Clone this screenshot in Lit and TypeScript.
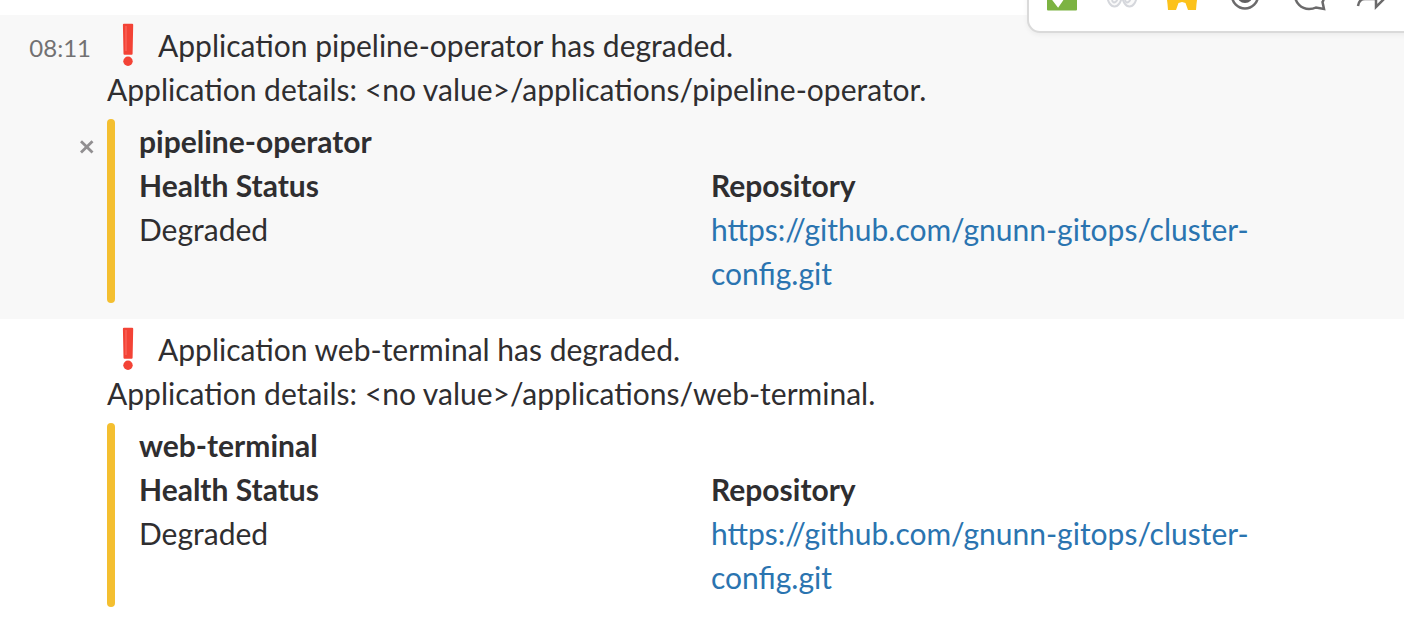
import { LitElement, html, css, svg } from "lit";
import { customElement, property } from "lit/decorators.js";

@customElement("alert-message")
class AlertMessage extends LitElement {
  @property() name = "";
  @property() time = "";
  @property({ type: Boolean, reflect: true }) active = false;

  static styles = css`
    :host { display: grid; grid-template-columns: 107px 1fr; height: 304px; box-sizing: border-box; padding-top: 8px; line-height: 44px; }
    :host([active]) { background: #f8f8f8; }
    .gutter { position: relative; }
    .time { display: block; padding: 3px 16px 0 0; text-align: right; font-size: 24px; line-height: 44px; color: #727172; }
    .close { position: absolute; left: 79px; top: 116px; display: block; }
    .row { height: 44px; white-space: pre; display: flex; }
    .mark { flex: none; width: 51px; }
    .mark svg { display: block; }
    .attachment { margin-top: 8px; height: 184px; display: grid; grid-template-columns: 8px 1fr; column-gap: 24px; }
    .bar { background: #f4bf30; border-radius: 4px; height: 184px; }
    .title, .label { font-weight: 700; }
    .fields { display: grid; grid-template-columns: 572px 560px; }
    a { color: #2a74b0; text-decoration: none; }
  `;

  render() {
    return html`
      <div class="gutter">
        ${this.time ? html`<span class="time">${this.time}</span>
        <svg class="close" width="16" height="16" viewBox="0 0 16 16"><path d="M2 2.2 13.5 13.5M13.5 2.2 2 13.5" stroke="#918f91" stroke-width="2.8" fill="none"/></svg>` : ""}
      </div>
      <div class="content">
        <div class="row">
          <span class="mark"><svg width="44" height="44" viewBox="107 23 44 44" overflow="visible"><path d="M123.900 23.700h8.300q1 0 1 1l-.6 29q0 1-1 1h-7.100q-1 0-1-1l-.6-29q0-1 1-1z" fill="#f34336"/><path d="M126 26v25" stroke="#f8594e" stroke-width="2"/><circle cx="128" cy="61.300" r="4.700" fill="#f34336"/></svg></span>
          <span>Application ${this.name} has degraded.</span>
        </div>
        <div class="row"><span>Application details: &lt;no value&gt;/applications/${this.name}.</span></div>
        <div class="attachment">
          <div class="bar"></div>
          <div class="body">
            <div class="title">${this.name}</div>
            <div class="fields">
              <div><div class="label">Health Status</div><div>Degraded</div></div>
              <div><div class="label">Repository</div><a>https://github.com/gnunn-gitops/cluster-<br>config.git</a></div>
            </div>
          </div>
        </div>
      </div>`;
  }
}

@customElement("app-root")
class AppRoot extends LitElement {
  static styles = css`
    :host { display: block; position: relative; width: 1404px; height: 622px; overflow: hidden; background: #fff; padding-top: 15px; box-sizing: border-box; font: 30px/44px Lato, sans-serif; color: #2f2e30; }
    .toolbar { position: absolute; left: 1027px; top: -44px; width: 420px; height: 77px; box-sizing: border-box; border: 2px solid #dadada; border-radius: 13px; background: #fff; box-shadow: 0 2px 5px rgba(0,0,0,.05); }
    .icons { position: absolute; left: 1028px; top: 0; display: block; }
  `;
  render() {
    return html`
      <alert-message active time="08:11" name="pipeline-operator"></alert-message>
      <alert-message name="web-terminal"></alert-message>
      <div class="toolbar"></div>
      <svg class="icons" width="376" height="30" viewBox="1028 0 376 30" fill="none">
        ${svg`
        <rect x="1047" y="-20" width="30" height="30.500" rx="1" fill="#7cb342"/>
        <path d="M1053 -3l5 6.500L1070 -14" stroke="#fff" stroke-width="5"/>
        <g stroke="#d5d7dc" stroke-width="2" fill="#fafafa"><ellipse cx="1114.500" cy="-4" rx="7" ry="10.500"/><ellipse cx="1129.500" cy="-4" rx="7" ry="10.500"/><path d="M1112 0q1 4 4 1.500 2-2 1.500-5M1125 0q1 4 4 1.500 2-2 1.500-5"/></g>
        <path d="M1167-4h30v4l-.5 4-.5 6h-8l-2.500-7-3.500-1-3.500 1-2.500 7h-8l-.5-6-.5-4z" fill="#fcc21b"/>
        <circle cx="1245" cy="-4.500" r="13" stroke="#6b6a6b" stroke-width="2.500"/><circle cx="1245" cy="-5" r="8" fill="#616061"/>
        <path d="M1324-4q0 4-1.500 6l1.500 7-8-1.500q-3 1.500-7 1.500a14 14 0 0 1-14-14" stroke="#6b6a6b" stroke-width="2.500"/>
        <path d="M1358 6q1-7 7-7h11V7l10-10" stroke="#6b6a6b" stroke-width="2.500"/>`}
      </svg>`;
  }
}
